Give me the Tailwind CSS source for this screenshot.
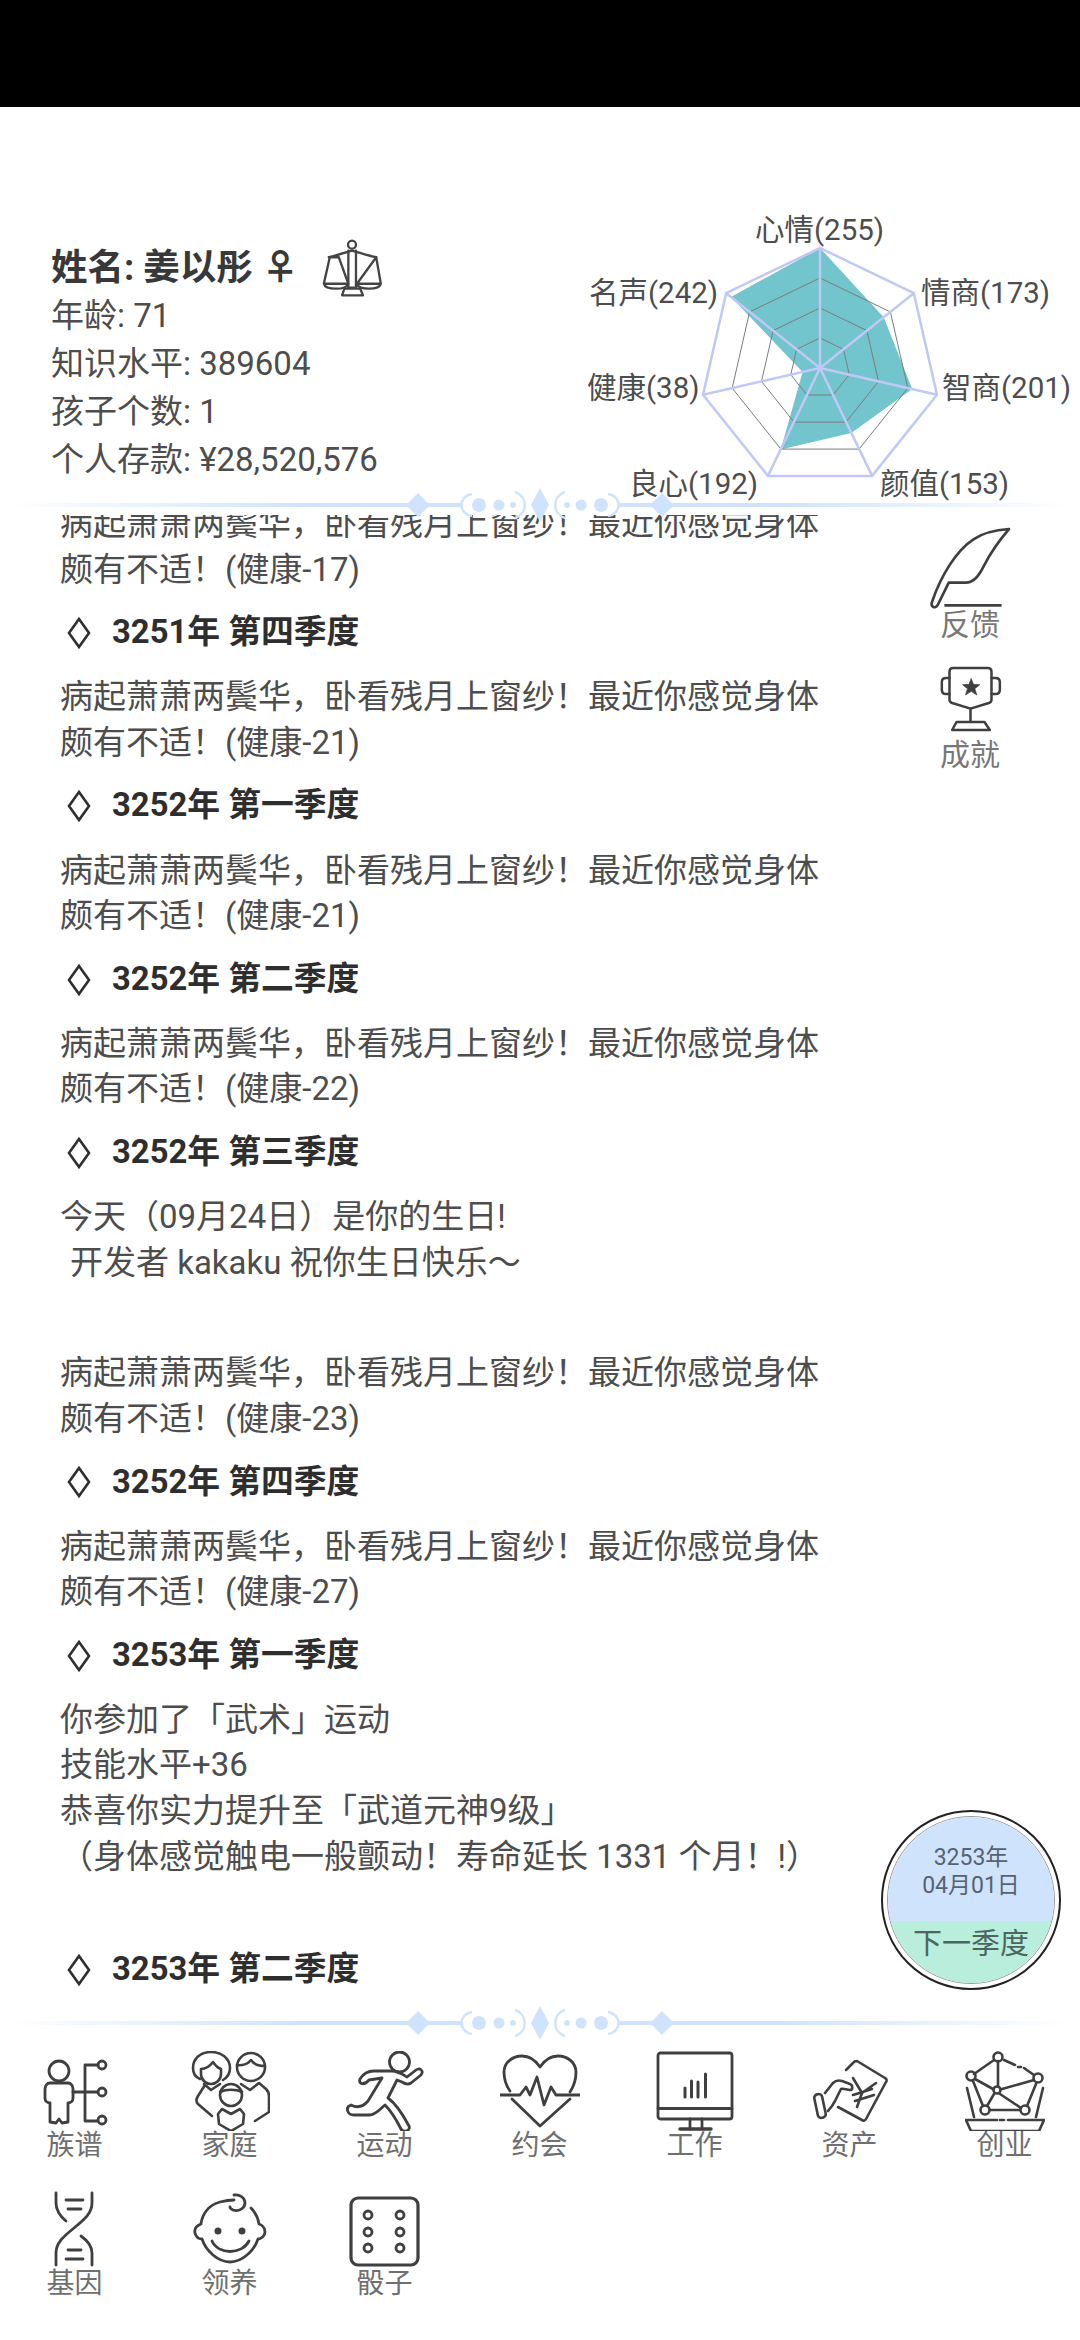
<!DOCTYPE html>
<html lang="zh">
<head>
<meta charset="utf-8">
<title>姜以彤</title>
<script src="https://cdn.jsdelivr.net/npm/@tailwindcss/browser@4"></script>
</head>
<body class="m-0 bg-white font-[Roboto,'Noto_Sans_CJK_SC',sans-serif] text-[#4d4d4d]">
<div class="w-[1080px] h-[2340px] overflow-hidden flex flex-col">
  <div class="h-[107px] bg-black shrink-0"></div>

  <header class="h-[398px] shrink-0 flex justify-between">
    <div class="pl-[51px] pt-[137px] text-[33px] leading-[48px]">
      <div class="flex items-center h-[48px] gap-[24px]">
        <span class="text-[36.5px] font-bold text-[#383838] whitespace-nowrap">姓名: 姜以彤 ♀</span>
        <svg class="w-[60px] h-[58px] shrink-0" viewBox="925 115 180 175" fill="none" stroke="#444" stroke-width="7" stroke-linejoin="round" stroke-linecap="round">
          <circle cx="1015" cy="132" r="12"/>
          <path d="M945 170C970 165 995 155 1015 150C1035 155 1060 165 1088 170"/>
          <path d="M1004 150V262H1027V150M985 285L992 265H1040L1048 285Z"/>
          <path d="M948 170L930 250H1004L975 170M948 170L975 170M930 250C935 270 998 270 1004 250"/>
          <path d="M1088 170L1030 250H1102L1088 170M1030 250C1035 270 1097 270 1102 250"/>
        </svg>
      </div>
      <div>年龄: 71</div>
      <div>知识水平: 389604</div>
      <div>孩子个数: 1</div>
      <div>个人存款: ¥28,520,576</div>
    </div>
    <svg class="w-[500px] h-[300px] self-end shrink-0" viewBox="580 205 500 300" font-size="29.5" fill="#4d4d4d">
      <polygon points="820,248 883.7,317.3 912.2,389.1 851.2,432.9 780.8,449.4 802.6,372 730.9,297" fill="#72c4cd"/>
      <g fill="none" stroke="#7d7d7d" stroke-width="1">
        <polygon points="820,338 843.5,349.3 849.3,374.7 833,395 807,395 790.8,374.7 796.500,349.3"/>
        <polygon points="820,308 866.9,330.6 878.5,381.4 846,422.1 794,422.1 761.5,381.4 773.1,330.6"/>
        <polygon points="820,278 890.4,311.9 907.8,388.1 859.1,449.1 780.9,449.1 732.2,388.1 749.6,311.9"/>
      </g>
      <g fill="none" stroke="#c0c9f6" stroke-width="2.5">
        <polygon points="820,248 913.8,293.2 937,394.8 872.1,475.9 767.9,475.9 703,394.8 726.2,293.2"/>
        <path d="M820 368V248M820 368L913.8 293.2M820 368L937 394.8M820 368L872.1 475.9M820 368L767.9 475.9M820 368L703 394.8M820 368L726.2 293.2"/>
      </g>
      <text x="755" y="240">心情(255)</text>
      <text x="921" y="303">情商(173)</text>
      <text x="942" y="398">智商(201)</text>
      <text x="880" y="494">颜值(153)</text>
      <text x="629" y="494">良心(192)</text>
      <text x="587" y="398">健康(38)</text>
      <text x="589" y="303">名声(242)</text>
    </svg>
  </header>

  <div class="relative h-[10px] shrink-0 z-10">
    <svg class="absolute left-0 top-[-20px] w-[1080px] h-[40px]" viewBox="0 0 1080 40" fill="#cfe4fc" stroke="none">
      <defs>
        <linearGradient id="fade-a" x1="0" x2="1" y1="0" y2="0">
          <stop offset="0" stop-color="#cfe4fc" stop-opacity="0"/>
          <stop offset="0.7" stop-color="#cfe4fc"/>
          <stop offset="1" stop-color="#cfe4fc"/>
        </linearGradient>
        <linearGradient id="fade-b" x1="1" x2="0" y1="0" y2="0">
          <stop offset="0" stop-color="#cfe4fc" stop-opacity="0"/>
          <stop offset="0.7" stop-color="#cfe4fc"/>
          <stop offset="1" stop-color="#cfe4fc"/>
        </linearGradient>
      </defs>
      <rect x="8" y="18" width="410" height="4" fill="url(#fade-a)"/>
      <rect x="662" y="18" width="410" height="4" fill="url(#fade-b)"/>
      <path d="M418 8L430 20 418 32 406 20ZM662 8L674 20 662 32 650 20Z"/>
      <path d="M425 18h36v4h-36zM619 18h36v4h-36z"/>
      <path d="M540 3L549 20 540 37 531 20Z"/>
      <circle cx="479" cy="20" r="7"/><circle cx="499" cy="20" r="5.5"/><circle cx="513" cy="20" r="3"/>
      <circle cx="601" cy="20" r="7"/><circle cx="581" cy="20" r="5.5"/><circle cx="567" cy="20" r="3"/>
      <g fill="none" stroke="#cfe4fc" stroke-width="2.5">
        <path d="M472 9C458 11 458 29 472 31M515 7C528 11 528 29 515 33"/>
        <path d="M608 9C622 11 622 29 608 31M565 7C552 11 552 29 565 33"/>
      </g>
    </svg>
  </div>

  <main class="relative h-[1508px] shrink-0 overflow-hidden">
    <div class="-mt-[14px] pl-[60px] w-[830px] text-[33px] leading-[45.6px]">
      <p>病起萧萧两鬓华，卧看残月上窗纱！最近你感觉身体颇有不适！(健康-17)</p>
      <h3 class="flex items-center mt-[18px] mb-[18.5px] text-[32.8px] font-bold text-[#2e2e2e]"><svg class="w-[24px] h-[34px] ml-[7px] mr-[21px]" viewBox="0 0 24 34" fill="none" stroke="#2e2e2e" stroke-width="2.6"><path d="M12 3L22 17 12 31 2 17Z"/></svg>3251年 第四季度</h3>
      <p>病起萧萧两鬓华，卧看残月上窗纱！最近你感觉身体颇有不适！(健康-21)</p>
      <h3 class="flex items-center mt-[18px] mb-[18.5px] text-[32.8px] font-bold text-[#2e2e2e]"><svg class="w-[24px] h-[34px] ml-[7px] mr-[21px]" viewBox="0 0 24 34" fill="none" stroke="#2e2e2e" stroke-width="2.6"><path d="M12 3L22 17 12 31 2 17Z"/></svg>3252年 第一季度</h3>
      <p>病起萧萧两鬓华，卧看残月上窗纱！最近你感觉身体颇有不适！(健康-21)</p>
      <h3 class="flex items-center mt-[18px] mb-[18.5px] text-[32.8px] font-bold text-[#2e2e2e]"><svg class="w-[24px] h-[34px] ml-[7px] mr-[21px]" viewBox="0 0 24 34" fill="none" stroke="#2e2e2e" stroke-width="2.6"><path d="M12 3L22 17 12 31 2 17Z"/></svg>3252年 第二季度</h3>
      <p>病起萧萧两鬓华，卧看残月上窗纱！最近你感觉身体颇有不适！(健康-22)</p>
      <h3 class="flex items-center mt-[18px] mb-[18.5px] text-[32.8px] font-bold text-[#2e2e2e]"><svg class="w-[24px] h-[34px] ml-[7px] mr-[21px]" viewBox="0 0 24 34" fill="none" stroke="#2e2e2e" stroke-width="2.6"><path d="M12 3L22 17 12 31 2 17Z"/></svg>3252年 第三季度</h3>
      <p>今天（09月24日）是你的生日!</p>
      <p class="pl-[10px]">开发者 kakaku 祝你生日快乐～</p>
      <p class="mt-[65px]">病起萧萧两鬓华，卧看残月上窗纱！最近你感觉身体颇有不适！(健康-23)</p>
      <h3 class="flex items-center mt-[18px] mb-[18.5px] text-[32.8px] font-bold text-[#2e2e2e]"><svg class="w-[24px] h-[34px] ml-[7px] mr-[21px]" viewBox="0 0 24 34" fill="none" stroke="#2e2e2e" stroke-width="2.6"><path d="M12 3L22 17 12 31 2 17Z"/></svg>3252年 第四季度</h3>
      <p>病起萧萧两鬓华，卧看残月上窗纱！最近你感觉身体颇有不适！(健康-27)</p>
      <h3 class="flex items-center mt-[18px] mb-[18.5px] text-[32.8px] font-bold text-[#2e2e2e]"><svg class="w-[24px] h-[34px] ml-[7px] mr-[21px]" viewBox="0 0 24 34" fill="none" stroke="#2e2e2e" stroke-width="2.6"><path d="M12 3L22 17 12 31 2 17Z"/></svg>3253年 第一季度</h3>
      <p>你参加了「武术」运动</p>
      <p>技能水平+36</p>
      <p>恭喜你实力提升至「武道元神9级」</p>
      <p class="whitespace-nowrap">（身体感觉触电一般颤动！寿命延长 1331 个月！!）</p>
      <h3 class="flex items-center mt-[68px] text-[32.8px] font-bold text-[#2e2e2e]"><svg class="w-[24px] h-[34px] ml-[7px] mr-[21px]" viewBox="0 0 24 34" fill="none" stroke="#2e2e2e" stroke-width="2.6"><path d="M12 3L22 17 12 31 2 17Z"/></svg>3253年 第二季度</h3>
    </div>

    <div class="absolute left-[880px] top-0 w-[180px] flex flex-col items-center text-[30px] leading-[36px] text-[#777]">
      <svg class="mt-[9px] w-[87px] h-[87px]" viewBox="140 40 260 260" fill="none" stroke="#3f3f3f" stroke-width="8" stroke-linejoin="round" stroke-linecap="round">
        <path d="M156 270C180 200 225 120 280 85C310 65 345 58 385 55C355 90 330 125 310 165C295 195 280 215 255 215H205L172 282C165 295 148 288 156 270Z"/>
        <path d="M192 283H363" stroke-linecap="butt"/>
      </svg>
      <span class="-mt-[4px]">反馈</span>
      <svg class="mt-[20px] w-[67px] h-[70px]" viewBox="170 455 200 210" fill="none" stroke="#3f3f3f" stroke-width="7.5" stroke-linejoin="round" stroke-linecap="round">
        <path d="M218 470H322Q333 470 333 481V565Q333 572 325 575L270 592 215 575Q207 572 207 565V481Q207 470 218 470Z"/>
        <path d="M207 500H197Q184 500 184 512V535Q184 548 197 548H207M333 500H345Q358 500 358 512V535Q358 548 345 548H333"/>
        <path d="M270 592V632M228 632H312L328 656H215Z"/>
        <path d="M272 502L279 519 298 520 283 532 289 551 272 540 255 551 261 532 246 520 265 519Z" fill="#3f3f3f" stroke-width="2"/>
      </svg>
      <span class="mt-[4px]">成就</span>
    </div>

    <div class="absolute left-[881px] top-[1295px] w-[180px] h-[180px] rounded-full border-2 border-[#222] bg-white p-[4px]">
      <div class="w-full h-full rounded-full overflow-hidden border border-[#999] flex flex-col text-[#566270]">
        <div class="h-[104px] bg-[#cfe4fc] flex flex-col items-center justify-center pb-[1px] pt-[6px] text-[23px] leading-[28px]">
          <span>3253年</span>
          <span>04月01日</span>
        </div>
        <div class="flex-1 bg-[#b9eedc] flex justify-center pt-[5px] text-[29px] leading-[36px] text-[#4a665e]">下一季度</div>
      </div>
    </div>
  </main>

  <div class="relative h-0 shrink-0 z-10">
    <svg class="absolute left-0 top-[-20px] w-[1080px] h-[40px]" viewBox="0 0 1080 40" fill="#cfe4fc" stroke="none">
      <rect x="8" y="18" width="410" height="4" fill="url(#fade-a)"/>
      <rect x="662" y="18" width="410" height="4" fill="url(#fade-b)"/>
      <path d="M418 8L430 20 418 32 406 20ZM662 8L674 20 662 32 650 20Z"/>
      <path d="M425 18h36v4h-36zM619 18h36v4h-36z"/>
      <path d="M540 3L549 20 540 37 531 20Z"/>
      <circle cx="479" cy="20" r="7"/><circle cx="499" cy="20" r="5.5"/><circle cx="513" cy="20" r="3"/>
      <circle cx="601" cy="20" r="7"/><circle cx="581" cy="20" r="5.5"/><circle cx="567" cy="20" r="3"/>
      <g fill="none" stroke="#cfe4fc" stroke-width="2.5">
        <path d="M472 9C458 11 458 29 472 31M515 7C528 11 528 29 515 33"/>
        <path d="M608 9C622 11 622 29 608 31M565 7C552 11 552 29 565 33"/>
      </g>
    </svg>
  </div>

  <nav class="-ml-[3px] w-[1085px] pt-[28px] grid grid-cols-[repeat(7,155px)] gap-y-[28px] text-[28px] leading-[30px] text-[#6f6f6f]">
    <div class="h-[110px] flex flex-col items-center">
      <svg class="w-[80px] h-[80px]" viewBox="0 0 80 80" fill="none" stroke="#3f3f3f" stroke-width="2.8" stroke-linejoin="round" stroke-linecap="round">
        <circle cx="24" cy="20" r="10"/>
        <path d="M15 32H33C36 32 38 35 38 38V47C38 50 36 52 33 52V71L27 72 24 68 21 72 15 71V52C12 52 10 50 10 47V38C10 35 12 32 15 32Z"/>
        <path d="M63 14H50V70H63M38 41H63"/>
        <circle cx="67" cy="14" r="4"/><circle cx="67" cy="41" r="4"/><circle cx="67" cy="69" r="4"/>
      </svg>
      <span>族谱</span>
    </div>
    <div class="h-[110px] flex flex-col items-center">
      <svg class="w-[80px] h-[80px]" viewBox="0 0 80 80" fill="none" stroke="#3f3f3f" stroke-width="2.6" stroke-linejoin="round" stroke-linecap="round">
        <path d="M10 28C5 26 3 22 3 17C3 7 11 1 21 1S40 7 40 17C40 22 38 26 33 29"/>
        <path d="M11 18C16 18 20 15 23 11C25 14 28 17 31 18V23C31 29 26 33 21 33S11 29 11 23Z"/>
        <path d="M15 34L8 45C6 48 6 51 8 53L22 65M14 33L21 39 30 33"/>
        <circle cx="61" cy="16" r="14"/>
        <path d="M47 14C52 15 58 13 61 9 63 12 68 15 75 15"/>
        <path d="M51 33L60 39 69 32 76 38C78 40 79 42 79 45V61L65 70"/>
        <circle cx="41" cy="44" r="11"/>
        <path d="M30 41C36 38 46 38 52 41"/>
        <path d="M32 58L28 63 29 73 41 80 53 73 54 63 50 58 41 63Z"/>
      </svg>
      <span>家庭</span>
    </div>
    <div class="h-[110px] flex flex-col items-center">
      <svg class="w-[80px] h-[80px]" viewBox="0 0 80 80" fill="none" stroke="#3f3f3f" stroke-width="2.8" stroke-linejoin="round" stroke-linecap="round">
        <circle cx="54.5" cy="11" r="10"/>
        <path d="M6 54C12 57 18 56 23 50L37 27 24 29C19 35 13 33 15 28 18 23 23 20 29 20H47C53 20 57 23 62 26L71 19C75 16 79 20 76 24L66 32C63 34 60 33 57 31L52 29 43 47C50 52 56 60 64 75 66 80 58 82 56 78 51 68 47 61 40 54 35 58 31 64 24 64H9C2 64 0 56 6 54Z"/>
      </svg>
      <span>运动</span>
    </div>
    <div class="h-[110px] flex flex-col items-center">
      <svg class="w-[80px] h-[80px]" viewBox="0 0 80 80" fill="none" stroke="#3f3f3f" stroke-width="2.8" stroke-linejoin="round" stroke-linecap="round">
        <path d="M10 40C5 33 4 26 4 21 4 12 12 5 22 5 30 5 36 10 40 16 44 10 50 5 58 5 68 5 76 12 76 21 76 28 74 35 70 41"/>
        <path d="M70 48L40 75 12 48"/>
        <path d="M0 44H20L26 36 30 44 37 26 44 54 51 36 56 44H80"/>
      </svg>
      <span>约会</span>
    </div>
    <div class="h-[110px] flex flex-col items-center">
      <svg class="w-[80px] h-[80px]" viewBox="0 0 80 80" fill="none" stroke="#3f3f3f" stroke-width="2.8" stroke-linejoin="round" stroke-linecap="round">
        <rect x="3" y="2" width="74" height="66" rx="2.5"/>
        <path d="M3 57.5H77M35 68V78M47 68V78"/>
        <path d="M25 78H56" stroke-width="3.5"/>
        <path d="M30 37V46M36.500 30V46M43 31V46M50.500 23V46" stroke-width="3"/>
      </svg>
      <span>工作</span>
    </div>
    <div class="h-[110px] flex flex-col items-center">
      <svg class="w-[80px] h-[80px]" viewBox="0 0 80 80" fill="none" stroke="#3f3f3f" stroke-width="2.6" stroke-linejoin="round" stroke-linecap="round">
        <path d="M36 19L44 11C45 10 46 10 47 10L75 27C77 28 77 30 76 31L56 68C55 70 53 70 52 69L28 56"/>
        <path d="M15 42L23 32C26 29 29 29 32 30L40 33C43 34 43 39 40 39 37 39 33 37 31 38L25 50 22 55 18 60"/>
        <rect x="6" y="43" width="8" height="24" rx="3.500" transform="rotate(-12 10 55)"/>
        <path d="M43 27L52 42 66 32M52 42L47 56M43 44L62 38M45 50L64 44"/>
      </svg>
      <span>资产</span>
    </div>
    <div class="h-[110px] flex flex-col items-center">
      <svg class="w-[80px] h-[80px]" viewBox="0 0 80 80" fill="none" stroke="#3f3f3f" stroke-width="2.6" stroke-linejoin="round" stroke-linecap="round">
        <path d="M33 10V35M29 9L9 23M10 28L28 38M37 38L69 29M35 43L56 57M29 43L22 55M8 30L18 55M71 33L62 55M25 59H55"/>
        <path d="M39 9L50 14M53 16H56M59 17L69 24" />
        <circle cx="33" cy="6" r="4.500"/><circle cx="6" cy="25" r="4.500"/><circle cx="73" cy="27" r="4.500"/><circle cx="32" cy="39" r="3.500"/><circle cx="20" cy="59" r="4.500"/><circle cx="60" cy="59" r="4.500"/>
        <path d="M2 37L9 66M78 37L71 66"/>
        <path d="M1 69H32M35 69H39M43 69H79M1 69L6 80H74L79 69"/>
      </svg>
      <span>创业</span>
    </div>
    <div class="h-[110px] flex flex-col items-center">
      <svg class="w-[80px] h-[80px]" viewBox="0 0 80 80" fill="none" stroke="#3f3f3f" stroke-width="2.8" stroke-linejoin="round" stroke-linecap="round">
        <path d="M21 4V14C21 21 25 27 31 32"/>
        <path d="M57 4V14C57 24 50 30 39 39 28 48 21 54 21 64V76"/>
        <path d="M46 47C53 52 57 58 57 64V76"/>
        <path d="M31 11H48M33 20H46M33 61H46M31 70H48"/>
      </svg>
      <span>基因</span>
    </div>
    <div class="h-[110px] flex flex-col items-center">
      <svg class="w-[80px] h-[80px]" viewBox="0 0 80 80" fill="none" stroke="#3f3f3f" stroke-width="2.8" stroke-linejoin="round" stroke-linecap="round">
        <path d="M61 19C65 23 68 29 69 35 72 36 75 39 75 43 75 47 71 50 68 50 64 62 52 73 40 73 28 73 16 62 12 50 9 50 6 48 5 44 4 40 6 37 11 35 12 26 18 16 30 13 34 12 38 11 44 11"/>
        <path d="M44 6C50 5 55 9 55 14 55 19 49 23 43 21 41 20 40 19 40 18"/>
        <path d="M22 52C28 66 52 66 59 52"/>
        <circle cx="28" cy="42" r="3.500" fill="#3f3f3f" stroke="none"/><circle cx="52" cy="42" r="3.500" fill="#3f3f3f" stroke="none"/>
      </svg>
      <span>领养</span>
    </div>
    <div class="h-[110px] flex flex-col items-center">
      <svg class="w-[80px] h-[80px]" viewBox="0 0 80 80" fill="none" stroke="#3f3f3f" stroke-linejoin="round" stroke-linecap="round">
        <rect x="6" y="9" width="67" height="67" rx="7" stroke-width="3.200"/>
        <g stroke-width="2.800">
          <circle cx="23" cy="26" r="4"/><circle cx="55" cy="26" r="4"/>
          <circle cx="23" cy="43" r="4"/><circle cx="55" cy="43" r="4"/>
          <circle cx="23" cy="59" r="4"/><circle cx="55" cy="59" r="4"/>
        </g>
      </svg>
      <span>骰子</span>
    </div>
  </nav>
</div>
</body>
</html>
